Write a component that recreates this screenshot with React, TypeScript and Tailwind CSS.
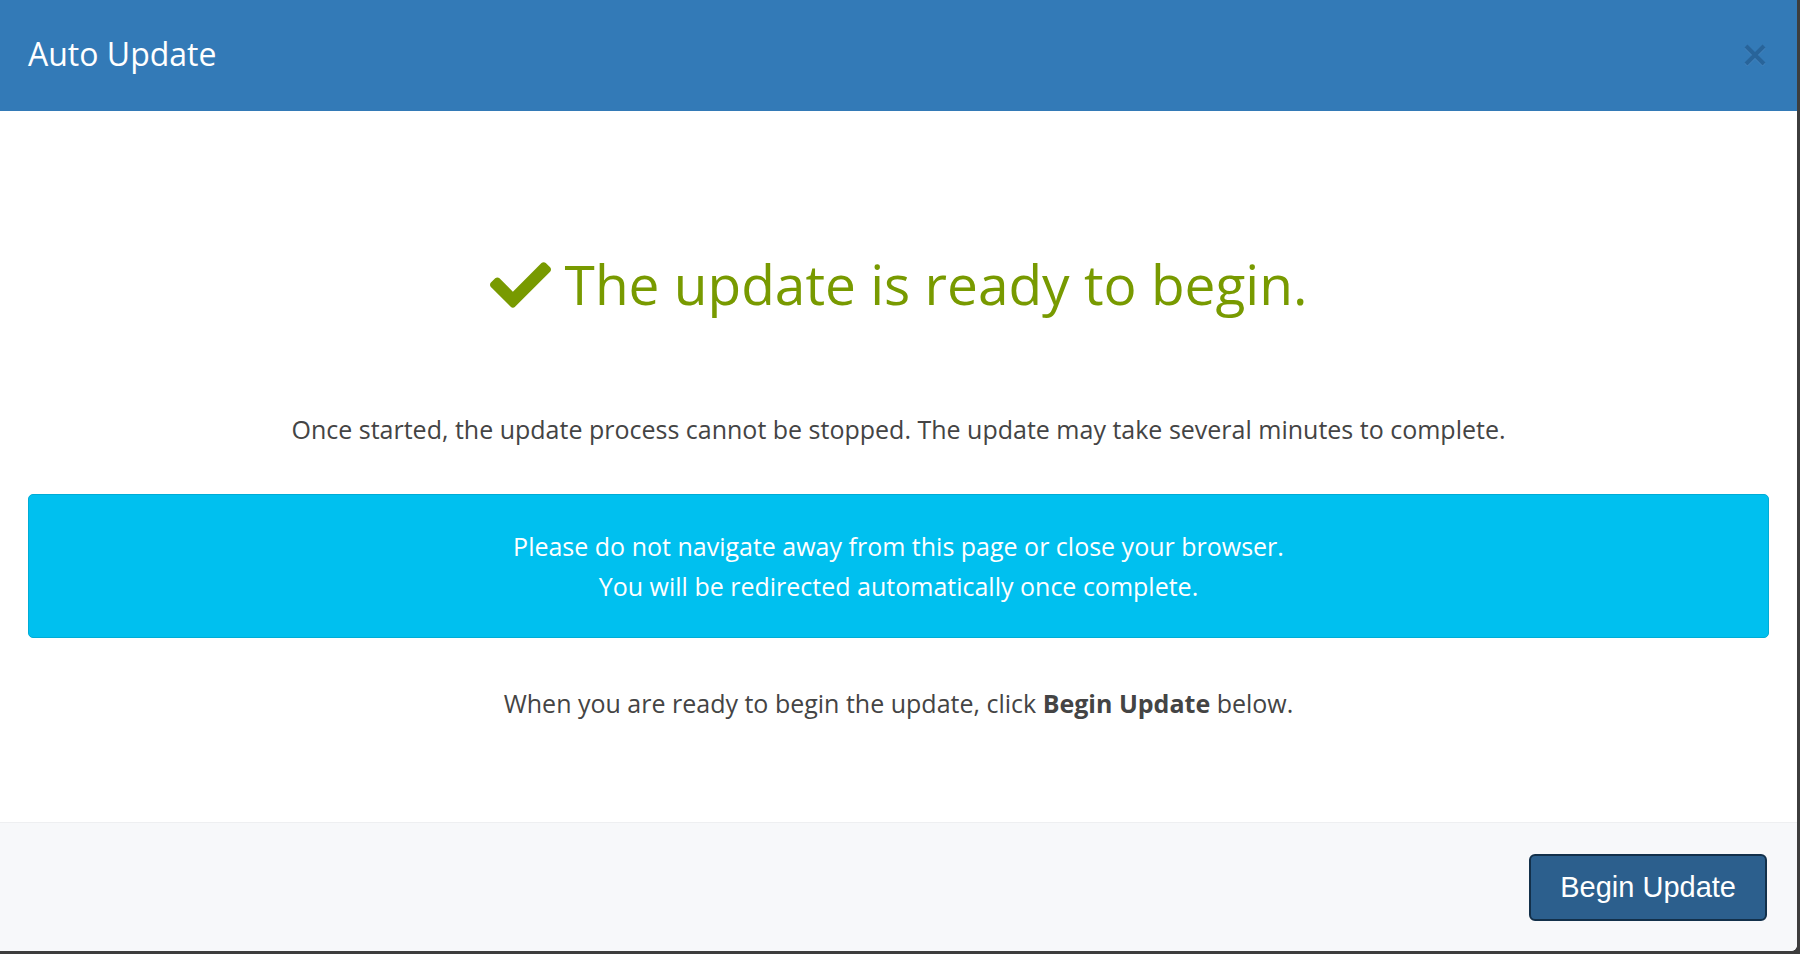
import React from "react";

export default function App() {
  return (
    <div className="w-[1800px] h-[954px] bg-[#3d3d3d] overflow-hidden" style={{ fontFamily: '"Open Sans", "Noto Sans", sans-serif' }}>
      <div className="w-[1797px] h-[951px] bg-white flex flex-col rounded-br-[6px] overflow-hidden">
        {/* Header */}
        <div className="h-[111px] bg-[#337ab7] flex items-center justify-between pl-[28px] pr-[31px] shrink-0">
          <h1 className="text-white text-[32px] leading-[44px] mb-[4px]">Auto Update</h1>
          <svg width="22" height="22" viewBox="0 0 22 22" className="mb-[1px]">
            <path d="M2 2 L20 20 M20 2 L2 20" stroke="#5a8fc4" strokeWidth="4" strokeLinecap="butt" transform="translate(0,1)" opacity="0.5" />
            <path d="M2 2 L20 20 M20 2 L2 20" stroke="#28649a" strokeWidth="4" strokeLinecap="butt" />
          </svg>
        </div>

        {/* Body */}
        <div className="flex-1 px-[28px] pt-[142px] flex flex-col items-center text-[#444444]">
          <div className="flex items-center">
            <svg width="61" height="46" viewBox="0 64 512 386" className="mr-[14px] mt-[2px]">
              <path
                fill="#789a00"
                d="M173.898 439.404l-166.4-166.4c-9.997-9.997-9.997-26.206 0-36.204l36.203-36.204c9.997-9.998 26.207-9.998 36.204 0L192 312.69 432.095 72.596c9.997-9.997 26.207-9.997 36.204 0l36.203 36.204c9.997 9.997 9.997 26.206 0 36.204l-294.4 294.401c-9.998 9.997-26.207 9.997-36.204-.001z"
              />
            </svg>
            <h2 className="text-[#789a00] text-[55px] leading-[62px]">The update is ready to begin.</h2>
          </div>

          <p className="mt-[98px] text-[25px] leading-[32px] text-center">
            Once started, the update process cannot be stopped. The update may take several minutes to complete.
          </p>

          <div className="mt-[49px] w-full bg-[#00c0ef] border border-[#00acd6] rounded-[5px] py-[31px] text-center text-white text-[25px] leading-[40px]">
            <div>Please do not navigate away from this page or close your browser.</div>
            <div>You will be redirected automatically once complete.</div>
          </div>

          <p className="mt-[49px] text-[25px] leading-[32px] text-center">
            When you are ready to begin the update, click <strong className="font-bold">Begin Update</strong> below.
          </p>
        </div>

        {/* Footer */}
        <div className="h-[129px] shrink-0 bg-[#f7f8fa] border-t border-[#eeeff1] flex items-start justify-end pt-[31px] pr-[30px]">
          <button
            className="h-[67px] px-[29px] bg-[#2c5f8d] border-2 border-[#13304a] rounded-[6px] text-white text-[29px]"
            style={{ fontFamily: '"Liberation Sans", Arial, sans-serif' }}
          >
            Begin Update
          </button>
        </div>
      </div>
    </div>
  );
}
